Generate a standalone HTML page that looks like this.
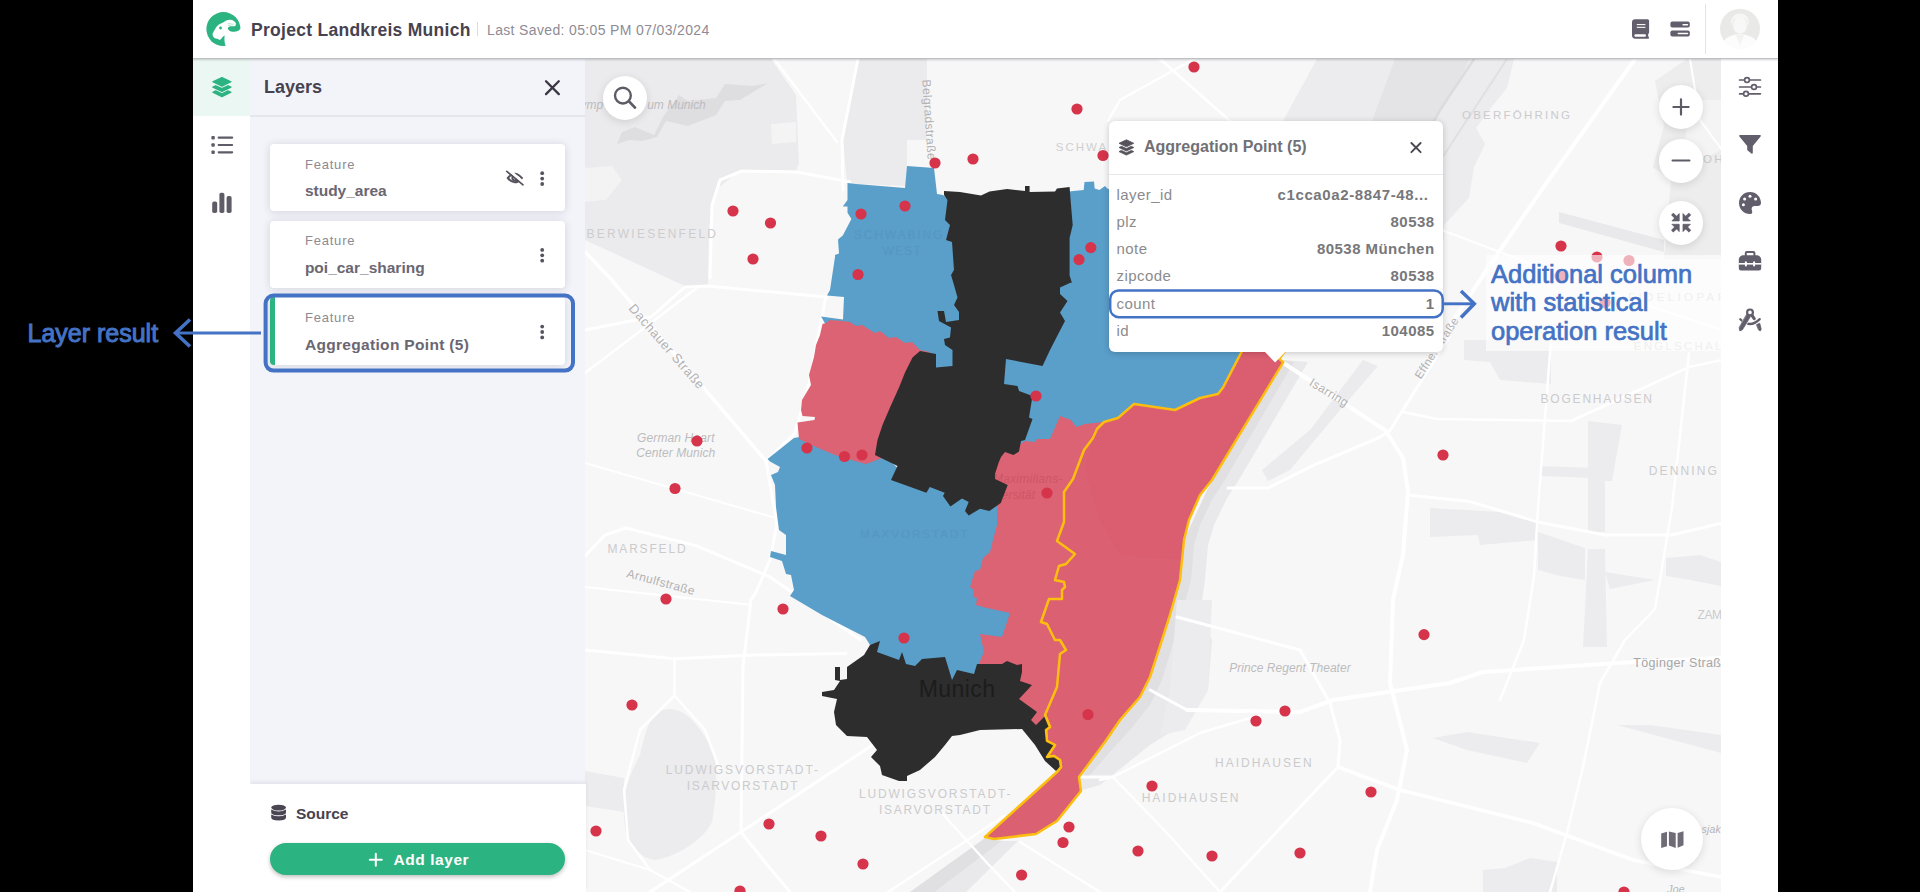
<!DOCTYPE html>
<html>
<head>
<meta charset="utf-8">
<title>Project Landkreis Munich</title>
<style>
*{box-sizing:border-box;margin:0;padding:0}
html,body{width:1920px;height:892px;overflow:hidden;background:#000;font-family:"Liberation Sans",sans-serif;}
.abs{position:absolute}
#app{position:absolute;left:193px;top:0;width:1585px;height:892px;background:#fff;overflow:hidden}
#hdr{position:absolute;left:0;top:0;width:1585px;height:59px;background:#fff;border-bottom:1.5px solid #bfbfc6;box-shadow:0 1px 2px rgba(0,0,0,.18);z-index:20}
#title{position:absolute;left:58px;top:19.5px;font-size:17.5px;font-weight:bold;color:#47424f;letter-spacing:.28px;white-space:nowrap}
#saved{position:absolute;left:294px;top:21.5px;font-size:14px;letter-spacing:.35px;color:#8e8b95;white-space:nowrap}
#nav{position:absolute;left:0;top:59px;width:57.4px;height:833px;background:#fff;z-index:5}
#nav .act{position:absolute;left:0;top:0;width:57.4px;height:57px;background:#ebf7f2}
#panel{position:absolute;left:57.4px;top:59px;width:334.6px;height:833px;background:#f3f4f9;z-index:4}
#ptitle{position:absolute;left:13.5px;top:18px;font-size:18px;font-weight:bold;color:#47424f}
#pline{position:absolute;left:0;top:56px;width:335.5px;height:2px;background:#e6e7ec}
.card{position:absolute;left:20px;width:295px;height:67.3px;background:#fff;border-radius:4px;box-shadow:0 1px 9px rgba(40,40,80,.16)}
.card .t1{position:absolute;left:34.5px;top:12.5px;font-size:13px;color:#8d8a93;letter-spacing:.8px}
.card .t2{position:absolute;left:34.5px;top:38.3px;font-size:15.5px;font-weight:bold;color:#6a6672;white-space:nowrap}
#pfoot{position:absolute;left:0;top:725px;width:335.5px;height:108px;background:#fff;box-shadow:0 -2px 4px rgba(40,40,80,.08)}
#src{position:absolute;left:45.5px;top:20.5px;font-size:15.5px;font-weight:bold;color:#47424f}
#addbtn{position:absolute;left:19.7px;top:58.8px;width:295px;height:32px;border-radius:16px;background:#2bb381;box-shadow:0 2px 4px rgba(0,0,0,.25)}
#addbtn span{position:absolute;left:123.5px;top:8px;font-size:15.5px;font-weight:bold;color:#fff;white-space:nowrap;letter-spacing:.55px}
#map{position:absolute;left:392px;top:59px;width:1136px;height:833px;background:#f7f7f7;overflow:hidden;z-index:1}
#tool{position:absolute;left:1528px;top:59px;width:57px;height:833px;background:#fff;z-index:5}
.rbtn{position:absolute;width:44px;height:44px;border-radius:50%;background:#fff;box-shadow:0 2px 8px rgba(0,0,0,.12)}
#popup{position:absolute;left:1108.5px;top:120.5px;width:334.5px;height:231.5px;background:#fff;border-radius:6px;box-shadow:0 1px 6px rgba(0,0,0,.2);z-index:30}
#popup .ttl{position:absolute;left:35.5px;top:17px;font-size:16px;font-weight:bold;color:#717075;white-space:nowrap}
#popup .ln{position:absolute;left:0;top:53.5px;width:334.5px;height:1px;background:#e8e8ea}
.row{position:absolute;left:8px;width:317.6px;height:20px;font-size:15px;color:#8b8b8e;letter-spacing:.45px}
.row b{position:absolute;right:-.45px;top:0;color:#77777a;font-size:15px;letter-spacing:.45px}
.row span{position:absolute;left:0;top:0}
.ann{color:#4472c4;position:absolute;white-space:nowrap;z-index:40;-webkit-text-stroke:.6px #4472c4}
</style>
</head>
<body>
<div id="app">
  <div id="hdr">
    <div id="title">Project Landkreis Munich</div>
    <div class="abs" style="left:284px;top:22px;width:1px;height:14px;background:#dcdce0"></div>
    <div id="saved">Last Saved: 05:05 PM 07/03/2024</div>
    <div class="abs" style="left:1512px;top:4px;width:1px;height:50px;background:#e4e4e6"></div>
  </div>
  <div id="nav"><div class="act"></div></div>
  <div id="panel">
    <div id="ptitle">Layers</div>
    <div id="pline"></div>
    <div class="card" style="top:85px"><div class="t1">Feature</div><div class="t2">study_area</div></div>
    <div class="card" style="top:161.7px"><div class="t1">Feature</div><div class="t2">poi_car_sharing</div></div>
    <div class="card" style="top:238.4px"><div class="abs" style="left:0;top:0;width:4.5px;height:67.3px;background:#2bb381;border-radius:4px 0 0 4px"></div><div class="t1">Feature</div><div class="t2" style="letter-spacing:.32px">Aggregation Point (5)</div></div>
    <div id="pfoot"><div id="src">Source</div><div id="addbtn"><span>Add layer</span></div></div>
  </div>
  <div id="map"><svg width="1136" height="833" viewBox="585 59 1136 833" style="position:absolute;left:0;top:0">
<rect x="585" y="59" width="1136" height="833" fill="#f7f7f7"/>
<polygon points="585,59 771,59 796,95 799,163 796,172 753,170 734,175 716,190 709,228 708,286 685,286 585,240" fill="#ebebed"/>
<polygon points="870,59 927,59 927,140 907,140 907,186 856,184 847,184 843,140 858,59" fill="#ebebed"/>
<polygon points="771,124 796,122 796,142 772,144" fill="#f4f4f5"/>
<polygon points="585,168 612,166 622,180 606,200 585,202" fill="#f3f3f4"/>
<polygon points="617,144 622,132 635,127 654,135 663,117 679,95 688,101 716,98 725,84 753,86 768,83 740,100 725,101 716,115 688,126 666,121 657,137 642,141 629,140" fill="#dedee0"/>
<polygon points="1317,59 1514,59 1507,88 1494,104 1476,128 1485,144 1474,167 1469,198 1444,225 1444,240 1300,352 1283,352 1283,121" fill="#ececee"/>
<polygon points="1395,59 1470,59 1436,121 1400,180 1330,300 1290,352 1283,352 1340,220 1372,121" fill="#e4e4e6"/>
<polyline points="1474,59 1440,110 1400,180" fill="none" stroke="#dcdcde" stroke-width="2.5" stroke-linejoin="round" stroke-linecap="round"/>
<polyline points="1507,59 1444,155" fill="none" stroke="#e0e0e2" stroke-width="2" stroke-linejoin="round" stroke-linecap="round"/>
<path d="M669 709C690 709 705 735 713 752C718 770 716 800 712 822C700 845 670 858 655 860C640 858 626 845 624 820C622 790 632 770 640 755C646 730 650 710 669 709Z" fill="#ececee"/>
<polygon points="585,771 624,778 624,812 585,806" fill="#ececee"/>
<polygon points="1283,360 1308,362 1240,478 1226,500 1214,525 1208,545 1205,580 1200,615 1212,640 1208,690 1190,720 1150,745 1125,765 1100,785 1082,790 1079,777 1105,742 1150,677 1184,540 1212,480" fill="#e9e9eb"/>
<polygon points="1283,360 1294,362 1226,478 1212,500 1200,525 1194,545 1191,580 1182,615 1174,640 1162,680 1150,705 1130,730 1110,752 1090,775 1080,780 1105,742 1150,677 1184,540 1212,480" fill="#e0e0e2"/>
<polygon points="985,838 1002,841 935,892 910,892" fill="#e0e0e2"/>
<polygon points="1002,841 1018,841 966,892 935,892" fill="#e9e9eb"/>
<polygon points="1363,360 1378,366 1340,410 1290,470 1268,481 1262,470 1310,430" fill="#ebebed"/>
<polygon points="1430,508 1500,512 1538,520 1538,540 1480,545 1478,535 1430,537" fill="#ececee"/>
<polygon points="1538,532 1585,548 1585,580 1560,576 1538,570" fill="#ececee"/>
<polygon points="1588,421 1622,425 1612,481 1605,481 1605,532 1588,532" fill="#ececee"/>
<polygon points="1541,466 1592,468 1592,478 1541,476" fill="#ececee"/>
<polygon points="1588,549 1605,549 1607,647 1583,647" fill="#ececee"/>
<polygon points="1605,572 1655,580 1610,589" fill="#ececee"/>
<polygon points="1666,558 1700,555 1721,562 1721,586 1690,580 1666,576" fill="#ececee"/>
<polygon points="1464,340 1551,340 1551,384 1500,380 1490,362 1464,360" fill="#ececee"/>
<polygon points="1433,738 1467,732 1540,743 1527,763 1467,750" fill="#ececee"/>
<polygon points="1617,725 1650,725 1721,735 1721,753" fill="#ececee"/>
<polygon points="1483,870 1505,868 1530,858 1557,862 1557,892 1483,892" fill="#ececee"/>
<polygon points="1177,600 1212,600 1208,690 1185,730 1160,735 1170,690" fill="#ececee"/>
<polygon points="1687,59 1721,59 1721,259 1664,259 1671,180 1653,167 1664,126 1655,81" fill="#ededee"/>
<polygon points="1559,212 1664,240 1664,252 1559,223" fill="#e9e9eb"/>
<polygon points="1690,100 1721,100 1721,150 1700,160 1685,140" fill="#f4f4f5"/>
<polyline points="858,59 842,140 843,190" fill="none" stroke="#ffffff" stroke-width="3" stroke-linejoin="round" stroke-linecap="round"/>
<polyline points="775,60 837,142" fill="none" stroke="#ffffff" stroke-width="2.5" stroke-linejoin="round" stroke-linecap="round"/>
<polyline points="710,278 712,205 720,180 742,171 797,172 850,182" fill="none" stroke="#ffffff" stroke-width="3" stroke-linejoin="round" stroke-linecap="round"/>
<polyline points="585,330 651,317 685,287 708,286 827,297" fill="none" stroke="#ffffff" stroke-width="3" stroke-linejoin="round" stroke-linecap="round"/>
<polyline points="585,252 610,278 766,461" fill="none" stroke="#ffffff" stroke-width="3.5" stroke-linejoin="round" stroke-linecap="round"/>
<polyline points="585,373 696,288.6" fill="none" stroke="#ffffff" stroke-width="2.5" stroke-linejoin="round" stroke-linecap="round"/>
<polyline points="585,463 773.7,517.4" fill="none" stroke="#ffffff" stroke-width="2" stroke-linejoin="round" stroke-linecap="round"/>
<polyline points="585,556 605,535 626,528 696,545.6 770,577 860,639.5" fill="none" stroke="#ffffff" stroke-width="3" stroke-linejoin="round" stroke-linecap="round"/>
<polyline points="585,587 748,604.5" fill="none" stroke="#ffffff" stroke-width="2" stroke-linejoin="round" stroke-linecap="round"/>
<polyline points="826,296 810,380 795,433 766,461 777,524 770,560 756,592 751,600 743,667 741,832 769,867 790,892" fill="none" stroke="#ffffff" stroke-width="3" stroke-linejoin="round" stroke-linecap="round"/>
<polyline points="585,650 674.5,658.7 755,655 846,653.5" fill="none" stroke="#ffffff" stroke-width="3" stroke-linejoin="round" stroke-linecap="round"/>
<polyline points="674.5,658.7 674.5,695.5 640,730 624,790 628,840 650,870 690,892" fill="none" stroke="#ffffff" stroke-width="2.5" stroke-linejoin="round" stroke-linecap="round"/>
<polyline points="674.5,695.5 705,730 720,770" fill="none" stroke="#ffffff" stroke-width="2.5" stroke-linejoin="round" stroke-linecap="round"/>
<polyline points="874,744 741,832 650,892" fill="none" stroke="#ffffff" stroke-width="3" stroke-linejoin="round" stroke-linecap="round"/>
<polyline points="585,850 650,870" fill="none" stroke="#ffffff" stroke-width="2" stroke-linejoin="round" stroke-linecap="round"/>
<polyline points="1282,362 1386,431 1403,458 1408,491.5 1403,555 1393,600 1390,683 1407,750 1397,800 1377,850 1370,892" fill="none" stroke="#ffffff" stroke-width="4" stroke-linejoin="round" stroke-linecap="round"/>
<polyline points="1408,495 1470,501.6 1538,522 1605,535 1672,535 1722,523" fill="none" stroke="#ffffff" stroke-width="3" stroke-linejoin="round" stroke-linecap="round"/>
<polyline points="1447,340 1389.6,431 1379,437.6 1315,464.6 1268,488 1228,488" fill="none" stroke="#ffffff" stroke-width="3" stroke-linejoin="round" stroke-linecap="round"/>
<polyline points="1403,412 1437,419 1571,421 1639,390 1689,367 1722,360" fill="none" stroke="#ffffff" stroke-width="2.5" stroke-linejoin="round" stroke-linecap="round"/>
<polyline points="1551,340 1538,508 1534,576 1524,640 1500,700" fill="none" stroke="#ffffff" stroke-width="2.5" stroke-linejoin="round" stroke-linecap="round"/>
<polyline points="1689,353 1672,508 1655,609 1625,640 1600,683 1583,767 1567,833 1550,892" fill="none" stroke="#ffffff" stroke-width="2.5" stroke-linejoin="round" stroke-linecap="round"/>
<polyline points="1187,710 1300,712 1333,700 1450,683 1483,672 1633,662 1721,658" fill="none" stroke="#ffffff" stroke-width="4" stroke-linejoin="round" stroke-linecap="round"/>
<polyline points="1150,690 1187,710" fill="none" stroke="#ffffff" stroke-width="3" stroke-linejoin="round" stroke-linecap="round"/>
<polyline points="1177,617 1300,650 1313,673 1330,703 1340,740 1338,767 1220,892" fill="none" stroke="#ffffff" stroke-width="3" stroke-linejoin="round" stroke-linecap="round"/>
<polyline points="1338,767 1400,790 1533,823 1633,860 1721,877" fill="none" stroke="#ffffff" stroke-width="3.5" stroke-linejoin="round" stroke-linecap="round"/>
<polyline points="1100,780 1113,777 1200,733 1260,715" fill="none" stroke="#ffffff" stroke-width="2.5" stroke-linejoin="round" stroke-linecap="round"/>
<polyline points="1113,777 1167,833 1220,892" fill="none" stroke="#ffffff" stroke-width="2.5" stroke-linejoin="round" stroke-linecap="round"/>
<polyline points="1079,777 1113,777" fill="none" stroke="#ffffff" stroke-width="3" stroke-linejoin="round" stroke-linecap="round"/>
<polyline points="1020,842 1100,892" fill="none" stroke="#ffffff" stroke-width="2.5" stroke-linejoin="round" stroke-linecap="round"/>
<polyline points="941,812 988,864 1015,892" fill="none" stroke="#ffffff" stroke-width="2.5" stroke-linejoin="round" stroke-linecap="round"/>
<polyline points="1004,816 888,892" fill="none" stroke="#ffffff" stroke-width="2.5" stroke-linejoin="round" stroke-linecap="round"/>
<polyline points="1194,59 1120,100 1108,121" fill="none" stroke="#ffffff" stroke-width="2.5" stroke-linejoin="round" stroke-linecap="round"/>
<polyline points="1160,59 1230,121" fill="none" stroke="#ffffff" stroke-width="3" stroke-linejoin="round" stroke-linecap="round"/>
<polyline points="1635,59 1545,185 1494,259 1452,322 1447,340" fill="none" stroke="#ffffff" stroke-width="4" stroke-linejoin="round" stroke-linecap="round"/>
<polyline points="1690,59 1700,120 1722,150" fill="none" stroke="#ffffff" stroke-width="2" stroke-linejoin="round" stroke-linecap="round"/>
<polyline points="1442,230 1600,290 1722,330" fill="none" stroke="#ffffff" stroke-width="2" stroke-linejoin="round" stroke-linecap="round"/>
<polygon points="847.5,183 856,184 905,188 907,166 934,168 937,194 943,195 951,201 975,201 975,370 925,372 842,322 826,325 821,316.5 843,319.5 844,297 827,295.5 830,290 835,257 835,255 839,253.6 838,239.5 842.8,235.5 851.4,219 847.5,212.8 847.5,206.5 842.8,206.5 847.5,200" fill="#5a9eca"/>
<polygon points="1069,191.6 1083.7,190 1084.5,182 1094,181.4 1094.7,188.5 1099.4,190 1105,186 1108,189 1130,188 1260,190 1260,350 1240,365 1225,395 1180,418 1130,412 1100,432 1050,447 1015,447 990,440 990,340 1050,330 1055,300 1065,240" fill="#5a9eca"/>
<polygon points="767.5,459 794,438 805,436 880,452 900,470 1000,498 1005,520 1015,610 1008,640 990,658 985,672 950,688 880,662 870,645 865,637 822,615 790,596 794,590 791,575 786,574 782,561 770,557 771,551 786,555 786,535 779,530 776,507 775,485 771,475 778,472 780,467 770,461.5" fill="#5a9eca"/>
<polygon points="822.5,324 826,323 830,320 842,321 850,322 856,326 862,325 875,333 880,331 889,338 896,337 905,343 912,342 920,350 930,352 882,458 866,464 855,461 835,455 816,447 799,439 797.5,422.5 814.5,420 815,417 802.5,416 801,410 802,400 811,385 809,375 814,357 816,345 820,335" fill="#dc6373"/>
<polygon points="1018,446 1025,441 1035,442 1037,439 1050,439 1060,416 1071,420 1076,427 1085,424 1104,422 1112,428 1085,500 1080,640 1055,716 1046,722 1030,730 1005,700 1005,672 975,672 984,652 980,634 1002,637 1010,613 985,607.5 976,605 977,598 973,597 974,590 970,587 975,571 980,570 983,558 990,552 993,540 997,525 997,502 985,500 985,460 1005,444" fill="#dc6373"/>
<polygon points="1262,320 1241.7,351.7 1223,387.5 1218,394 1200,398 1175,410 1134,404 1118,418 1104,422 1097,429 1093,438 1084,450 1073,479 1064,492 1064,522 1057,541 1075,554 1066,564 1059,566 1055,580 1064,582 1065,587 1062,590 1062,599 1049,599 1041,622 1047,624 1055,640 1060,640 1066,650 1060,654 1057,687 1045,715 1050,727 1046,730 1047,741 1055,745 1047,757 1054,756 1060,760 1061,767 1057,772 985,837 994,839 1036,834 1057,821 1081,791 1079,777 1105,742 1120,720 1140,697 1150,677 1162,640 1170,615 1180,580 1184,540 1189,520 1200,495 1212,480 1283.3,362.2 1279.3,358.9 1300,330" fill="#db6071" stroke="#fdbf0f" stroke-width="2.5" stroke-linejoin="round"/>
<clipPath id="r3c"><polygon points="1262,320 1241.7,351.7 1223,387.5 1218,394 1200,398 1175,410 1134,404 1118,418 1104,422 1097,429 1093,438 1084,450 1073,479 1064,492 1064,522 1057,541 1075,554 1066,564 1059,566 1055,580 1064,582 1065,587 1062,590 1062,599 1049,599 1041,622 1047,624 1055,640 1060,640 1066,650 1060,654 1057,687 1045,715 1050,727 1046,730 1047,741 1055,745 1047,757 1054,756 1060,760 1061,767 1057,772 985,837 994,839 1036,834 1057,821 1081,791 1079,777 1105,742 1120,720 1140,697 1150,677 1162,640 1170,615 1180,580 1184,540 1189,520 1200,495 1212,480 1283.3,362.2 1279.3,358.9 1300,330"/></clipPath>
<polygon points="1095,430 1135,404 1175,410 1225,390 1245,350 1300,350 1200,500 1188,530 1184,560 1120,555 1100,520 1085,470" fill="#b0203a" opacity=".03" clip-path="url(#r3c)"/>
<g font-family="Liberation Sans, sans-serif">
<text x="949" y="482.5" font-size="12" fill="#c24c5c" font-style="italic" textLength="113.5" lengthAdjust="spacing" opacity=".55">Ludwig-Maximilians-</text>
<text x="977" y="498.8" font-size="12" fill="#c24c5c" font-style="italic" textLength="58" lengthAdjust="spacing" opacity=".55">Universität</text>
</g>
<polygon points="944,191 960,192 981,195.5 989.5,191.6 1007,189 1025,191 1025,186 1029.6,186 1029.6,192 1055,191.6 1057,188.5 1069.6,187 1071,205 1072.7,225 1069.6,238 1069.6,275.6 1072,283 1071,282.5 1060,287.5 1060,294 1067.5,301 1060,312.5 1065,321 1059,332.5 1050,350 1042.5,366 1006,359 1004,384 1017.5,386 1019,391 1032.5,396 1029,417.5 1032.5,419 1025,440 1021,441 1019,451.5 1013.4,455 1005,452 1001,457 998.5,463 995,474 995,479 1007.7,485 1000.8,503 989.4,511 980,508.7 968.7,515.6 965,511 968.7,502 962,498.4 950.4,506.4 943,496 944.7,492.7 929.8,487 926.4,492.7 891,480 897.5,466 875,455 877.5,440 882.5,425 890,407.5 899,387.5 905,372.5 912.5,357.5 920,351 936,354 936,367.5 952.5,366 952.5,350 945,345 944,339 950,337.5 951,327.5 939,321 937.5,311 944,311 946,322 959,320 959,312 954,305 957.5,297.5 954,285 951,275 954,270 952,242 946,240 950,225 945,220 947.5,200 944,195" fill="#2d2d2d"/>
<polygon points="870,645 880,641 877,652 899,660 902,652 906,664 915,666 922,659 945,657 949,670 952,680 957,670 974,674 977,664 990,664 1002,664 1007,661 1017,665 1022,664 1022,672 1020,681 1032,685 1019,699 1037,712 1031,720 1036,725 1045,716 1050,727 1046,730 1047,741 1055,745 1047,757 1054,756 1060,760 1061,767 1056,771 1045,761 1035,745 1022,729 980,730 960,735 952,736 945,745 935,757 920,770 907,776 907,781 899,781 882,775 880,766 871,757 877,750 867,737 847,736 836,725 834,712 837,699 822,696 822,692 834,690 840,681 835,680 835,667 840,667 840,680 847,679 847,667 864,655" fill="#2d2d2d"/>
<polyline points="1045,715 1050,727 1046,730 1047,741 1055,745 1047,757 1054,756 1060,760 1061,767 1057,772" fill="none" stroke="#fdbf0f" stroke-width="2.5" stroke-linejoin="round"/>
<g font-family="Liberation Sans, sans-serif">
<text x="647.2" y="109" font-size="12" fill="#bcbcbe" font-style="italic" textLength="58.6" lengthAdjust="spacing">um Munich</text>
<text x="603.5" y="109" font-size="12" letter-spacing="0.2" fill="#bcbcbe" text-anchor="end" font-weight="normal" font-style="italic">Olymp</text>
<text x="1082" y="150.5" font-size="11.5" letter-spacing="2.0" fill="#cfcfd1" text-anchor="middle" font-weight="normal" font-style="normal">SCHWA</text>
<text x="1462" y="119.3" font-size="11.5" fill="#cbcbcd" font-style="normal" textLength="108" lengthAdjust="spacing">OBERFÖHRING</text>
<text x="1703" y="163" font-size="11.5" letter-spacing="2.3" fill="#c9c9cb" text-anchor="start" font-weight="normal" font-style="normal">OH</text>
<text x="575" y="238" font-size="12" fill="#cdcdcf" font-style="normal" textLength="141" lengthAdjust="spacing">OBERWIESENFELD</text>
<text x="853.8" y="238.6" font-size="12" fill="#5596c3" font-style="normal" textLength="88.6" lengthAdjust="spacing">SCHWABING</text>
<text x="882.5" y="255.2" font-size="12" fill="#5596c3" font-style="normal" textLength="38.0" lengthAdjust="spacing">WEST</text>
<text x="860" y="538" font-size="11.5" fill="#5596c3" font-style="normal" textLength="107.5" lengthAdjust="spacing">MAXVORSTADT</text>
<text x="607.5" y="552.6" font-size="12" fill="#cbcbcd" font-style="normal" textLength="78.1" lengthAdjust="spacing">MARSFELD</text>
<text x="665.7" y="774" font-size="12" fill="#cbcbcd" font-style="normal" textLength="152.3" lengthAdjust="spacing">LUDWIGSVORSTADT-</text>
<text x="686.7" y="790" font-size="12" fill="#cbcbcd" font-style="normal" textLength="110.9" lengthAdjust="spacing">ISARVORSTADT</text>
<text x="858.9" y="797.6" font-size="12" fill="#cbcbcd" font-style="normal" textLength="151.5" lengthAdjust="spacing">LUDWIGSVORSTADT-</text>
<text x="879" y="813.7" font-size="12" fill="#cbcbcd" font-style="normal" textLength="111" lengthAdjust="spacing">ISARVORSTADT</text>
<text x="1540.4" y="403" font-size="12" fill="#cbcbcd" font-style="normal" textLength="111.6" lengthAdjust="spacing">BOGENHAUSEN</text>
<text x="1648.8" y="474.7" font-size="12" fill="#cbcbcd" font-style="normal" textLength="68.0" lengthAdjust="spacing">DENNING</text>
<text x="1628" y="301" font-size="11.5" fill="#d4d4d6" font-style="normal" textLength="109" lengthAdjust="spacing">FIDELIOPARK</text>
<text x="1633.7" y="349.8" font-size="11.5" fill="#d4d4d6" font-style="normal" textLength="87.8" lengthAdjust="spacing">ENGLSCHAL</text>
<text x="1697.6" y="618.8" font-size="12" fill="#cbcbcd" font-style="normal" textLength="24.4" lengthAdjust="spacing">ZAM</text>
<text x="1215" y="766.7" font-size="12" fill="#cbcbcd" font-style="normal" textLength="96.7" lengthAdjust="spacing">HAIDHAUSEN</text>
<text x="1141.7" y="802.3" font-size="12" fill="#cbcbcd" font-style="normal" textLength="96.6" lengthAdjust="spacing">HAIDHAUSEN</text>
<text x="637" y="441.7" font-size="12" fill="#bcbcbe" font-style="italic" textLength="77.5" lengthAdjust="spacing">German Heart</text>
<text x="636.3" y="456.9" font-size="12" fill="#bcbcbe" font-style="italic" textLength="78.9" lengthAdjust="spacing">Center Munich</text>
<text x="1229.3" y="671.7" font-size="12" fill="#bcbcbe" font-style="italic" textLength="121.4" lengthAdjust="spacing">Prince Regent Theater</text>
<text x="1633.3" y="666.7" font-size="12.5" fill="#a6a6a8" font-style="normal" textLength="87.7" lengthAdjust="spacing">Töginger Straß</text>
<text x="1721" y="833" font-size="10.5" letter-spacing="0.2" fill="#b5b5b7" text-anchor="end" font-weight="normal" font-style="italic">sjak</text>
<text x="1676" y="893" font-size="10.5" letter-spacing="0.2" fill="#b5b5b7" text-anchor="middle" font-weight="normal" font-style="italic">Joe</text>
<text x="918.8" y="697" font-size="23" fill="#1c1c1c" font-style="normal" textLength="76.2" lengthAdjust="spacing">Munich</text>
<text x="0" y="0" font-size="12" letter-spacing="0.4" fill="#b2b2b4" text-anchor="middle" font-weight="normal" font-style="normal" transform="translate(925,120) rotate(86)">Belgradstraße</text>
<text x="0" y="0" font-size="13" letter-spacing="0.6" fill="#b2b2b4" text-anchor="middle" font-weight="normal" font-style="normal" transform="translate(663.5,349.5) rotate(49)">Dachauer Straße</text>
<text x="0" y="0" font-size="12" letter-spacing="0.4" fill="#b2b2b4" text-anchor="middle" font-weight="normal" font-style="normal" transform="translate(660,586) rotate(15)">Arnulfstraße</text>
<text x="0" y="0" font-size="12" letter-spacing="0.4" fill="#b2b2b4" text-anchor="middle" font-weight="normal" font-style="normal" transform="translate(1327,396) rotate(31)">Isarring</text>
<text x="0" y="0" font-size="11.5" letter-spacing="0.4" fill="#b2b2b4" text-anchor="middle" font-weight="normal" font-style="normal" transform="translate(1440,350) rotate(-57)">Effne. straße</text>
</g>
<circle cx="1194" cy="67" r="5.6" fill="#d5344b"/>
<circle cx="1077" cy="109" r="5.6" fill="#d5344b"/>
<circle cx="973" cy="159" r="5.6" fill="#d5344b"/>
<circle cx="935" cy="163" r="5.6" fill="#d5344b"/>
<circle cx="733" cy="211" r="5.6" fill="#d5344b"/>
<circle cx="770.5" cy="223" r="5.6" fill="#d5344b"/>
<circle cx="753" cy="259" r="5.6" fill="#d5344b"/>
<circle cx="861" cy="214" r="5.6" fill="#d5344b"/>
<circle cx="905" cy="206" r="5.6" fill="#d5344b"/>
<circle cx="858" cy="274.5" r="5.6" fill="#d5344b"/>
<circle cx="1079" cy="259.6" r="5.6" fill="#d5344b"/>
<circle cx="1090.8" cy="247.6" r="5.6" fill="#d5344b"/>
<circle cx="1103" cy="155.5" r="5.6" fill="#d5344b"/>
<circle cx="1036" cy="396" r="5.6" fill="#d5344b"/>
<circle cx="1561" cy="246" r="5.6" fill="#d5344b"/>
<circle cx="697" cy="441" r="5.6" fill="#d5344b"/>
<circle cx="675" cy="488.5" r="5.6" fill="#d5344b"/>
<circle cx="807" cy="448" r="5.6" fill="#d5344b"/>
<circle cx="844.5" cy="456.5" r="5.6" fill="#d5344b"/>
<circle cx="862" cy="455" r="5.6" fill="#d5344b"/>
<circle cx="1047" cy="493" r="5.6" fill="#d5344b"/>
<circle cx="1443" cy="455" r="5.6" fill="#d5344b"/>
<circle cx="666" cy="599" r="5.6" fill="#d5344b"/>
<circle cx="783" cy="609" r="5.6" fill="#d5344b"/>
<circle cx="904" cy="638" r="5.6" fill="#d5344b"/>
<circle cx="1424" cy="634.6" r="5.6" fill="#d5344b"/>
<circle cx="632" cy="705" r="5.6" fill="#d5344b"/>
<circle cx="1256" cy="721" r="5.6" fill="#d5344b"/>
<circle cx="1285" cy="711" r="5.6" fill="#d5344b"/>
<circle cx="1088" cy="714.5" r="5.6" fill="#d5344b"/>
<circle cx="1152" cy="786" r="5.6" fill="#d5344b"/>
<circle cx="1371" cy="792" r="5.6" fill="#d5344b"/>
<circle cx="596" cy="831" r="5.6" fill="#d5344b"/>
<circle cx="769" cy="824" r="5.6" fill="#d5344b"/>
<circle cx="821" cy="836" r="5.6" fill="#d5344b"/>
<circle cx="863" cy="864" r="5.6" fill="#d5344b"/>
<circle cx="1069" cy="827" r="5.6" fill="#d5344b"/>
<circle cx="1063" cy="842.5" r="5.6" fill="#d5344b"/>
<circle cx="1138" cy="851" r="5.6" fill="#d5344b"/>
<circle cx="1212" cy="856" r="5.6" fill="#d5344b"/>
<circle cx="1300" cy="853" r="5.6" fill="#d5344b"/>
<circle cx="1021.6" cy="875" r="5.6" fill="#d5344b"/>
<circle cx="740" cy="891" r="5.6" fill="#d5344b"/>
<circle cx="1624" cy="892" r="5.6" fill="#d5344b"/>
<circle cx="1597" cy="257" r="5.6" fill="#d5344b"/>
<circle cx="1629" cy="260.5" r="5.6" fill="#d5344b"/>
<circle cx="1560" cy="276" r="5.6" fill="#d5344b"/>
<circle cx="1605" cy="302.5" r="5.6" fill="#d5344b"/>
</svg><div class="rbtn" style="left:18.4px;top:17.2px"></div>
<div class="rbtn" style="left:1074px;top:26px"></div>
<div class="rbtn" style="left:1074px;top:79.5px"></div>
<div class="rbtn" style="left:1074px;top:142px"></div>
<div class="rbtn" style="left:1056.4px;top:748.8px;width:62px;height:62px"></div>
<svg class="abs" style="left:0;top:0" width="1136" height="833" viewBox="585 59 1136 833">
<g stroke="#5e5b66" fill="none" stroke-linecap="round">
<circle cx="622.9" cy="95.6" r="7.9" stroke-width="2.4"/><path d="M629 101.4L635 107.6" stroke-width="2.8"/>
<path d="M1673.4 107H1688.6M1681 99.4V114.6" stroke-width="2.2"/>
<path d="M1672.6 160.5H1689.4" stroke-width="2.2"/>
</g>
<g fill="#625e6b" stroke="#625e6b" stroke-width="3.2">
<g id="arw"><path d="M1679.2 213.6V220.9H1671.9Z" stroke-width=".8" stroke-linejoin="round"/><path d="M1672.2 213.9L1677 218.7"/></g>
<use href="#arw" transform="translate(3362.2,0) scale(-1,1)"/>
<use href="#arw" transform="translate(0,445.2) scale(1,-1)"/>
<use href="#arw" transform="translate(3362.2,445.2) scale(-1,-1)"/>
</g>
<g fill="#6f6b77">
<path d="M1661.2 833.6L1667 831.8V846.2L1661.2 848Z"/><path d="M1668.9 831.5L1675.7 833V848L1668.9 845.6Z"/><path d="M1677.6 833L1683.5 831.2V845.2L1677.6 847.8Z"/>
</g>
</svg>
</div>
  <div id="tool"></div>
</div>
<div id="popup">
  <div class="ttl">Aggregation Point (5)</div>
  <div class="ln"></div>
  <div class="row" style="top:65.2px"><span>layer_id</span><b style="right:5.5px;letter-spacing:.62px">c1cca0a2-8847-48...</b></div>
  <div class="row" style="top:92.4px"><span>plz</span><b>80538</b></div>
  <div class="row" style="top:119.6px"><span>note</span><b>80538 München</b></div>
  <div class="row" style="top:146.8px"><span>zipcode</span><b>80538</b></div>
  <div class="row" style="top:174px"><span>count</span><b>1</b></div>
  <div class="row" style="top:201.2px"><span>id</span><b>104085</b></div>
</div>
<svg class="abs" style="left:0;top:0;z-index:45;pointer-events:none" width="1920" height="892" viewBox="0 0 1920 892">
<!-- logo -->
<g transform="translate(206.4,12.1) scale(0.05382)">
<circle cx="316" cy="316" r="316" fill="#2bb381"/>
<path d="M625 312C610 335 595 345 580 352C560 362 540 367 520 367C495 367 475 365 460 360C440 352 425 345 420 335C405 325 398 312 400 300C402 285 410 275 420 270C440 262 460 262 480 262C500 260 520 258 537 256C546 240 550 225 548 208C540 190 528 175 510 165C490 150 465 142 440 142C410 142 385 150 360 162L320 190C300 200 280 208 260 215C240 225 225 235 210 250C195 265 182 282 170 300L140 350L115 400C112 420 118 435 125 450C130 465 140 475 150 480C165 488 185 490 200 495C212 498 222 504 230 510L250 520L280 490C290 478 300 466 310 455C320 447 330 440 340 435C335 460 334 485 335 510C336 530 338 550 340 570C345 592 352 612 360 630L380 660H660V312Z" fill="#fff"/>
<path d="M392 218C430 200 480 196 530 208C485 206 440 212 398 232ZM402 244C440 230 480 228 520 238C482 238 445 244 408 258Z" fill="#2bb381" opacity=".45"/>
<circle cx="263" cy="295" r="26" fill="#2bb381"/>
</g>
<!-- book -->
<g fill="#625e6b">
<path d="M1635.2 19.3H1647.6Q1649.1 19.3 1649.1 20.8V32.6Q1649.1 33.6 1648.2 34V36.6Q1649.1 36.9 1649.1 37.7Q1649.1 38.7 1648 38.7H1635.4Q1632 38.7 1632 35.3V22.5Q1632 19.3 1635.2 19.3Z"/>
<rect x="1634.4" y="34.3" width="11.6" height="2.5" rx="1.2" fill="#fff"/>
<rect x="1636.8" y="24" width="8.6" height="1.1" fill="#fff" opacity=".95"/>
<rect x="1636.8" y="26.8" width="8.6" height="1.1" fill="#fff" opacity=".95"/>
<rect x="1670.4" y="21.6" width="19.4" height="6" rx="1.8"/>
<rect x="1670.4" y="30.4" width="19.4" height="6.2" rx="1.8"/>
<rect x="1682.4" y="24" width="5.8" height="1.4" rx=".7" fill="#fff"/>
<rect x="1677.6" y="32.8" width="10.6" height="1.4" rx=".7" fill="#fff"/>
</g>
<!-- avatar -->
<g>
<circle cx="1740" cy="28.7" r="20" fill="#e9e9e8"/>
<clipPath id="avc"><circle cx="1740" cy="28.7" r="20.4"/></clipPath>
<g clip-path="url(#avc)">
<path d="M1721 50Q1722.5 38.5 1730 36.2L1736.4 34.2H1743.6L1750 36.2Q1757.5 38.5 1759 50Z" fill="#fcfcfc"/>
<path d="M1735.6 34.4L1740 45.2L1744.4 34.4Z" fill="#f3f3f2"/>
<path d="M1731.2 24C1730.6 16.5 1735 13.4 1740 13.4C1745 13.4 1749.4 16.5 1748.8 24C1748.6 26 1747.8 26 1747.6 24.6C1747.4 21 1746 19 1744 18.2C1741 19.6 1736.6 19.6 1734.4 19C1733 20.4 1732.6 22.4 1732.4 24.6C1732.2 26 1731.4 26 1731.2 24Z" fill="#f6f6f5"/>
<ellipse cx="1740" cy="25.4" rx="6.9" ry="8.4" fill="#f8f8f8"/>
</g>
</g>
<!-- nav icons -->
<g fill="#2bb381" stroke="#2bb381" stroke-width="1.2" stroke-linejoin="round">
<path d="M221.9 77.5L231 81.8L221.9 86.1L212.8 81.8Z"/>
<path d="M212.8 87.1L215.8 85.7L221.9 88.6L228 85.7L231 87.1L221.9 91.4Z"/>
<path d="M212.8 92.3L215.8 90.9L221.9 93.8L228 90.9L231 92.3L221.9 96.6Z"/>
</g>
<g fill="#5f5b67">
<rect x="211.4" y="136" width="3.4" height="3.4" rx=".9"/><rect x="211.4" y="143.3" width="3.4" height="3.4" rx=".9"/><rect x="211.4" y="150.6" width="3.4" height="3.4" rx=".9"/>
<rect x="217.6" y="136.6" width="15.6" height="2.2" rx="1.1"/><rect x="217.6" y="143.9" width="15.6" height="2.2" rx="1.1"/><rect x="217.6" y="151.2" width="15.6" height="2.2" rx="1.1"/>
<rect x="212.2" y="201.6" width="5" height="11.4" rx="1.8"/><rect x="219.4" y="192.8" width="5" height="20.2" rx="1.8"/><rect x="226.6" y="196" width="5" height="17" rx="1.8"/>
</g>
<!-- panel icons -->
<g stroke="#3b3644" stroke-width="2.3" stroke-linecap="round" fill="none"><path d="M546 81.3L558.8 94.1M558.8 81.3L546 94.1"/></g>
<g fill="#56525e">
<circle cx="542.2" cy="173.2" r="1.9"/><circle cx="542.2" cy="178.6" r="1.9"/><circle cx="542.2" cy="184" r="1.9"/>
<circle cx="542.2" cy="249.9" r="1.9"/><circle cx="542.2" cy="255.3" r="1.9"/><circle cx="542.2" cy="260.7" r="1.9"/>
<circle cx="542.2" cy="326.6" r="1.9"/><circle cx="542.2" cy="332" r="1.9"/><circle cx="542.2" cy="337.4" r="1.9"/>
</g>
<g fill="none" stroke="#56525e" stroke-linecap="round">
<path d="M507.8 178Q514.8 169.4 521.8 178Q514.8 186.6 507.8 178Z" stroke-width="2"/>
<circle cx="514.8" cy="178" r="2.4" stroke-width="2"/>
<path d="M507 170.8L522.8 184.4" stroke="#fff" stroke-width="3.2" transform="translate(1.2,-1.2)"/>
<path d="M506.8 171.4L523 184.8" stroke-width="1.7"/>
</g>
<!-- source db icon -->
<g fill="#4a4652">
<ellipse cx="278.6" cy="807.6" rx="7.4" ry="2.9"/>
<path d="M271.2 809.6Q278.6 813.6 286 809.6V812.4Q286 815.2 278.6 815.2Q271.2 815.2 271.2 812.4Z"/>
<path d="M271.2 814.4Q278.6 818.2 286 814.4V817.4Q286 820.4 278.6 820.4Q271.2 820.4 271.2 817.4Z"/>
</g>
<path d="M369.8 859.8H381.8M375.8 853.8V865.8" stroke="#fff" stroke-width="2" stroke-linecap="round"/>
<!-- tool icons -->
<g stroke="#625e6b" stroke-width="1.7" stroke-linecap="round" fill="#fff">
<path d="M1739.6 80H1760.4M1739.6 87H1760.4M1739.6 93.8H1760.4"/>
<circle cx="1747" cy="80" r="2.4"/><circle cx="1754" cy="87" r="2.4"/><circle cx="1746" cy="93.8" r="2.4"/>
</g>
<g fill="#625e6b">
<path d="M1740 135H1760Q1761.6 135 1760.6 136.6L1752.8 146V152.6Q1752.8 154.4 1751.4 153.4L1748 150.8Q1747.2 150.2 1747.2 149.2V146L1739.4 136.6Q1738.4 135 1740 135Z"/>
<path d="M1750 192C1743.9 192 1739 196.9 1739 203C1739 209.1 1743.9 214 1750 214C1751.6 214 1752.6 212.8 1752.2 211.4C1751.6 209.4 1751.2 208 1752.4 206.8C1753.6 205.6 1755.4 206 1757.6 206C1759.6 206 1761 204.8 1761 203C1761 196.9 1756.1 192 1750 192Z"/>
<g fill="#fff"><circle cx="1743.4" cy="204.8" r="1.5"/><circle cx="1744.6" cy="199" r="1.5"/><circle cx="1750" cy="196.2" r="1.5"/><circle cx="1755.6" cy="199" r="1.5"/></g>
<path d="M1746.8 251H1753.4Q1755.4 251 1755.4 253V255.2H1757.6Q1761.2 256.6 1761.2 259.4V268.2Q1761.2 270.4 1759 270.4H1741Q1738.8 270.4 1738.8 268.2V259.4Q1738.8 256.6 1742.4 255.2H1744.8V253Q1744.8 251 1746.8 251ZM1746.8 252.9V255.2H1753.4V252.9Z" fill-rule="evenodd"/>
<rect x="1738.6" y="263" width="22.8" height="1.6" fill="#fff"/>
<rect x="1744.9" y="261.2" width="2" height="5.2" rx="1" fill="#fff"/><rect x="1753.1" y="261.2" width="2" height="5.2" rx="1" fill="#fff"/>
</g>
<g stroke="#625e6b" fill="none" stroke-linecap="round">
<path d="M1740.3 319.3Q1750 328.8 1759.7 319.1" stroke-width="2.3"/>
<path d="M1748.4 316L1740.6 329.4" stroke="#fff" stroke-width="5.8" stroke-linecap="butt"/>
<polygon points="1746.7,314.8 1750.4,316.6 1742.4,329.8 1739.8,330.9 1739.2,328" fill="#625e6b" stroke-width=".8" stroke-linejoin="round"/>
<path d="M1752 315.4L1754.2 318.6" stroke-width="3.1"/>
<polygon points="1756.7,324.6 1759.7,323.2 1761.2,329 1760.5,330.8 1758.9,330.2" fill="#625e6b" stroke-width=".8" stroke-linejoin="round"/>
<circle cx="1750" cy="312.4" r="2.9" stroke-width="2.2" fill="#fff"/>
</g>
<!-- popup icons -->
<g fill="#55525a" stroke="#55525a" stroke-width=".8" stroke-linejoin="round">
<path d="M1126.4 139.8L1133.8 143.3L1126.4 146.8L1119 143.3Z"/>
<path d="M1119 147.5L1121.5 146.3L1126.4 148.6L1131.3 146.3L1133.8 147.5L1126.4 151Z"/>
<path d="M1119 151.6L1121.5 150.4L1126.4 152.7L1131.3 150.4L1133.8 151.6L1126.4 155.1Z"/>
</g>
<path d="M1411.4 143L1420.6 152.2M1420.6 143L1411.4 152.2" stroke="#4a4750" stroke-width="1.9" stroke-linecap="round" fill="none"/>
</svg>

<svg class="abs" id="poptri" style="left:1260px;top:351px;z-index:31" width="30" height="14" viewBox="1260 351 30 14"><path d="M1264.6 351.5H1285.7L1275.1 362.6Z" fill="#fff"/></svg>
<div class="abs" style="left:1486px;top:255px;width:235px;height:96px;background:rgba(255,255,255,.62);z-index:35"></div>
<svg class="abs" style="left:0;top:0;z-index:41" width="1920" height="892" viewBox="0 0 1920 892" fill="none" stroke="#4472c4">
<rect x="265.6" y="295.5" width="307.4" height="75.1" rx="8" ry="8" stroke-width="4"/>
<path d="M261 333H176" stroke-width="3"/>
<path d="M190 319.5L175.5 333L190 346.5" stroke-width="3.6"/>
<rect x="1110.2" y="290.4" width="332.5" height="26.8" rx="8.5" ry="8.5" stroke-width="2.5"/>
<path d="M1443.5 303.8H1474" stroke-width="2.9"/>
<path d="M1461 291L1474.3 303.8L1461 317.5" stroke-width="3.5"/>
</svg>
<div class="ann" id="a1" style="left:27.5px;top:318px;font-size:25px;line-height:30px;-webkit-text-stroke-width:1px">Layer result</div>
<div class="ann" id="a2" style="left:1491px;top:259.5px;font-size:25.5px;line-height:28.8px;-webkit-text-stroke-width:.7px">Additional column<br>with statistical<br>operation result</div>

</body>
</html>
